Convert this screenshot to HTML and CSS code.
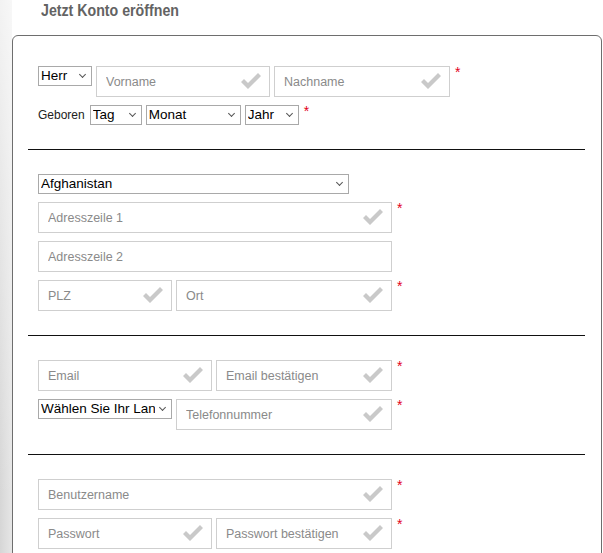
FILE: index.html
```html
<!DOCTYPE html>
<html lang="de">

<head>
    <meta charset="UTF-8">
    <title>Jetzt Konto eröffnen</title>
    <link rel="stylesheet" href="styles.css">
</head>

<body>
    <h2 class="page-title"><span>Jetzt Konto eröffnen</span></h2>
    <div class="reg-box">
        <!-- Name und Geburtsdatum -->
        <div class="reg-section">
            <div class="reg-row">
                <span class="sel w-herr">
                    <select name="anrede"><option>Herr</option><option>Frau</option></select>
                </span>
                <span class="field w-half">
                    <input type="text" placeholder="Vorname" name="vorname">
                    <svg class="ok" viewBox="0 0 20 16"><polygon points="0,9 3,6 7,10 17,0 20,3 7,16"/></svg>
                </span>
                <span class="field w-half2">
                    <input type="text" placeholder="Nachname" name="nachname">
                    <svg class="ok" viewBox="0 0 20 16"><polygon points="0,9 3,6 7,10 17,0 20,3 7,16"/></svg>
                </span>
                <span class="req">*</span>
            </div>
            <div class="reg-row center">
                <label class="lbl">Geboren</label>
                <span class="sel w-tag">
                    <select name="tag"><option>Tag</option></select>
                </span>
                <span class="sel w-monat">
                    <select name="monat"><option>Monat</option></select>
                </span>
                <span class="sel w-jahr">
                    <select name="jahr"><option>Jahr</option></select>
                </span>
                <span class="req top">*</span>
            </div>
        </div>
        <div class="sep"></div>
        <!-- Adresse -->
        <div class="reg-section">
            <div class="reg-row">
                <span class="sel w-land">
                    <select name="land"><option>Afghanistan</option></select>
                </span>
            </div>
            <div class="reg-row">
                <span class="field w-full">
                    <input type="text" placeholder="Adresszeile 1" name="adresse1">
                    <svg class="ok" viewBox="0 0 20 16"><polygon points="0,9 3,6 7,10 17,0 20,3 7,16"/></svg>
                </span>
                <span class="req">*</span>
            </div>
            <div class="reg-row">
                <span class="field w-full">
                    <input type="text" placeholder="Adresszeile 2" name="adresse2">
                </span>
            </div>
            <div class="reg-row">
                <span class="field w-plz">
                    <input type="text" placeholder="PLZ" name="plz">
                    <svg class="ok" viewBox="0 0 20 16"><polygon points="0,9 3,6 7,10 17,0 20,3 7,16"/></svg>
                </span>
                <span class="field w-ort">
                    <input type="text" placeholder="Ort" name="ort">
                    <svg class="ok" viewBox="0 0 20 16"><polygon points="0,9 3,6 7,10 17,0 20,3 7,16"/></svg>
                </span>
                <span class="req">*</span>
            </div>
        </div>
        <div class="sep"></div>
        <!-- Kontakt -->
        <div class="reg-section">
            <div class="reg-row">
                <span class="field w-half">
                    <input type="text" placeholder="Email" name="email">
                    <svg class="ok" viewBox="0 0 20 16"><polygon points="0,9 3,6 7,10 17,0 20,3 7,16"/></svg>
                </span>
                <span class="field w-half2">
                    <input type="text" placeholder="Email bestätigen" name="email2">
                    <svg class="ok" viewBox="0 0 20 16"><polygon points="0,9 3,6 7,10 17,0 20,3 7,16"/></svg>
                </span>
                <span class="req">*</span>
            </div>
            <div class="reg-row">
                <span class="sel w-plz">
                    <select name="vorwahl"><option>Wählen Sie Ihr Land</option></select>
                </span>
                <span class="field w-ort">
                    <input type="text" placeholder="Telefonnummer" name="telefon">
                    <svg class="ok" viewBox="0 0 20 16"><polygon points="0,9 3,6 7,10 17,0 20,3 7,16"/></svg>
                </span>
                <span class="req">*</span>
            </div>
        </div>
        <div class="sep"></div>
        <!-- Zugangsdaten -->
        <div class="reg-section">
            <div class="reg-row">
                <span class="field w-full">
                    <input type="text" placeholder="Benutzername" name="benutzer">
                    <svg class="ok" viewBox="0 0 20 16"><polygon points="0,9 3,6 7,10 17,0 20,3 7,16"/></svg>
                </span>
                <span class="req">*</span>
            </div>
            <div class="reg-row">
                <span class="field w-half">
                    <input type="password" placeholder="Passwort" name="passwort">
                    <svg class="ok" viewBox="0 0 20 16"><polygon points="0,9 3,6 7,10 17,0 20,3 7,16"/></svg>
                </span>
                <span class="field w-half2">
                    <input type="password" placeholder="Passwort bestätigen" name="passwort2">
                    <svg class="ok" viewBox="0 0 20 16"><polygon points="0,9 3,6 7,10 17,0 20,3 7,16"/></svg>
                </span>
                <span class="req">*</span>
            </div>
        </div>
    </div>
</body>

</html>
```

FILE: styles.css
```css
* {
    padding: 0px;
    margin: 0px;
    box-sizing: border-box;
}

html {
    background:
        linear-gradient(to bottom, rgba(255, 255, 255, .7), rgba(255, 255, 255, 0) 500px),
        linear-gradient(to right, #d6d6d6, #e6e6e6 12px, #ffffff 12px);
}

body {
    font-family: "Liberation Sans", Arial, sans-serif;
    color: #222222;
    overflow: hidden;
}

/* Überschrift */
.page-title {
    padding-left: 41px;
    height: 35px;
    line-height: 21px;
    font-family: "Liberation Sans", Arial, sans-serif;
    font-size: 16.5px;
    font-weight: bold;
    color: #636363;
}

/* schmale Schrift nachbilden */
.page-title span {
    display: inline-block;
    transform: scaleX(0.86);
    transform-origin: left center;
}

/* Formular-Box */
.reg-box {
    margin-left: 12px;
    width: 590px;
    border: #6e6e6e solid 1px;
    border-radius: 6px;
    background: #ffffff;
    padding: 30px 0px 60px 0px;
}

.reg-section {
    padding: 0px 25px;
    display: flex;
    flex-direction: column;
    gap: 8px;
}

.reg-row {
    display: flex;
    align-items: flex-start;
    gap: 4px;
}

.reg-row.center {
    align-items: center;
}

.sep {
    height: 1px;
    background: #111111;
    margin: 24px 16px 24px 15px;
}

.lbl {
    font-size: 12px;
    color: #222222;
    margin-right: 1px;
}

.req {
    color: #e2001a;
    font-size: 14px;
    line-height: 14px;
    margin-left: 1px;
    margin-top: -1px;
}

.reg-row.center .req.top {
    align-self: flex-start;
}

/* Eingabefelder */
.field {
    position: relative;
    display: block;
    height: 31px;
}

.field input {
    width: 100%;
    height: 31px;
    border: #cfcfcf solid 1px;
    padding-left: 9px;
    font-family: "Liberation Sans", Arial, sans-serif;
    font-size: 12.5px;
    color: #333333;
    outline: none;
}

.field input::placeholder {
    color: #8a8a8a;
}

.field .ok {
    position: absolute;
    right: 9px;
    top: 7px;
    width: 20px;
    height: 16px;
    fill: #c9c9c9;
}

.w-half { width: 174px; }
.w-half2 { width: 176px; }
.w-full { width: 354px; }
.w-plz { width: 134px; }
.w-ort { width: 216px; }

/* Auswahllisten */
.sel {
    position: relative;
    display: block;
    height: 20px;
}

.sel select {
    appearance: none;
    -webkit-appearance: none;
    width: 100%;
    height: 20px;
    border: #a9a9a9 solid 1px;
    border-radius: 0px;
    background: #ffffff;
    padding: 0px 16px 0px 2px;
    font-family: "Liberation Sans", Arial, sans-serif;
    font-size: 13.5px;
    line-height: 18px;
    color: #000000;
}

.sel::after {
    content: "";
    position: absolute;
    right: 7px;
    top: 6px;
    width: 4px;
    height: 4px;
    border-right: #555555 solid 1.5px;
    border-bottom: #555555 solid 1.5px;
    transform: rotate(45deg);
    pointer-events: none;
}

.w-herr { width: 54px; }
.w-tag { width: 52px; }
.w-monat { width: 95px; }
.w-jahr { width: 54px; }
.w-land { width: 311px; }
```
